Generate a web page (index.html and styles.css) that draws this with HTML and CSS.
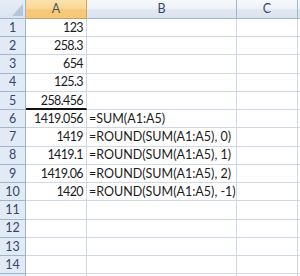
FILE: index.html
```html
<!DOCTYPE html>
<html>
<head>
<meta charset="utf-8">
<link rel="stylesheet" href="styles.css">
</head>
<body>
<div class="sheet">
  <div class="corner"><span class="tri"></span></div>
  <div class="colhead sel">A</div>
  <div class="colhead">B</div>
  <div class="colhead">C</div>
  <div class="colhead last"></div>

  <div class="rowhead">1</div><div class="cell num">123</div><div class="cell"></div><div class="cell"></div><div class="cell last"></div>
  <div class="rowhead">2</div><div class="cell num">258.3</div><div class="cell"></div><div class="cell"></div><div class="cell last"></div>
  <div class="rowhead">3</div><div class="cell num">654</div><div class="cell"></div><div class="cell"></div><div class="cell last"></div>
  <div class="rowhead">4</div><div class="cell num">125.3</div><div class="cell"></div><div class="cell"></div><div class="cell last"></div>
  <div class="rowhead">5</div><div class="cell num thick">258.456</div><div class="cell"></div><div class="cell"></div><div class="cell last"></div>
  <div class="rowhead">6</div><div class="cell num">1419.056</div><div class="cell txt">=SUM(A1:A5)</div><div class="cell"></div><div class="cell last"></div>
  <div class="rowhead">7</div><div class="cell num">1419</div><div class="cell txt">=ROUND(SUM(A1:A5), 0)</div><div class="cell"></div><div class="cell last"></div>
  <div class="rowhead">8</div><div class="cell num">1419.1</div><div class="cell txt">=ROUND(SUM(A1:A5), 1)</div><div class="cell"></div><div class="cell last"></div>
  <div class="rowhead">9</div><div class="cell num">1419.06</div><div class="cell txt">=ROUND(SUM(A1:A5), 2)</div><div class="cell"></div><div class="cell last"></div>
  <div class="rowhead">10</div><div class="cell num">1420</div><div class="cell txt">=ROUND(SUM(A1:A5), -1)</div><div class="cell"></div><div class="cell last"></div>
  <div class="rowhead">11</div><div class="cell"></div><div class="cell"></div><div class="cell"></div><div class="cell last"></div>
  <div class="rowhead">12</div><div class="cell"></div><div class="cell"></div><div class="cell"></div><div class="cell last"></div>
  <div class="rowhead">13</div><div class="cell"></div><div class="cell"></div><div class="cell"></div><div class="cell last"></div>
  <div class="rowhead">14</div><div class="cell"></div><div class="cell"></div><div class="cell"></div><div class="cell last"></div>
  <div class="rowhead"></div><div class="cell"></div><div class="cell"></div><div class="cell"></div><div class="cell last"></div>
</div>
</body>
</html>
```
FILE: styles.css
```css
html, body {
  margin: 0;
  padding: 0;
  background: #ffffff;
  overflow: hidden;
}
.sheet {
  display: grid;
  grid-template-columns: 26px 61px 150px 61px 2px;
  grid-template-rows: 19px repeat(14, 18.24px) 3px;
  width: 300px;
  height: 276px;
  overflow: hidden;
  font-family: Lato, "Open Sans", sans-serif;
  font-size: 12.5px;
  color: #1b1b1b;
}
.sheet > div {
  box-sizing: border-box;
  border-right: 1px solid #d0d7e5;
  border-bottom: 1px solid #d0d7e5;
  display: flex;
  align-items: flex-end;
  padding-bottom: 2px;
  white-space: nowrap;
  line-height: 1;
}
.corner {
  position: relative;
  background: linear-gradient(#e6edf7, #d9e3f0);
  border-right-color: #9eb6ce !important;
  border-bottom-color: #9eb6ce !important;
}
.tri {
  position: absolute;
  right: 2px;
  bottom: 2px;
  width: 0;
  height: 0;
  border-left: 11px solid transparent;
  border-bottom: 12px solid #b6c6da;
}
.colhead {
  justify-content: center;
  align-items: center !important;
  padding-bottom: 0 !important;
  background: linear-gradient(#f7f9fc 0%, #eef2f8 45%, #e1e8f2 55%, #dbe3ee 100%);
  border-right-color: #9eb6ce !important;
  border-bottom-color: #9eb6ce !important;
  color: #34476a;
}
.colhead.sel {
  background: linear-gradient(#fbe2ad 0%, #f9d896 45%, #f5c977 55%, #f4c878 100%);
  border-right-color: #d3a85a !important;
  border-bottom-color: #c8a060 !important;
  color: #555555;
}
.rowhead {
  justify-content: center;
  background: #e2eaf5;
  border-right-color: #9eb6ce !important;
  border-bottom-color: #9eb6ce !important;
  color: #34476a;
}
.num {
  justify-content: flex-end;
  padding-right: 3px;
  letter-spacing: -0.6px;
}
.txt {
  padding-left: 2px;
}
.cell.thick {
  border-bottom: 2px solid #111 !important;
  padding-bottom: 1px;
}
.last {
  border-right: none !important;
}
```
